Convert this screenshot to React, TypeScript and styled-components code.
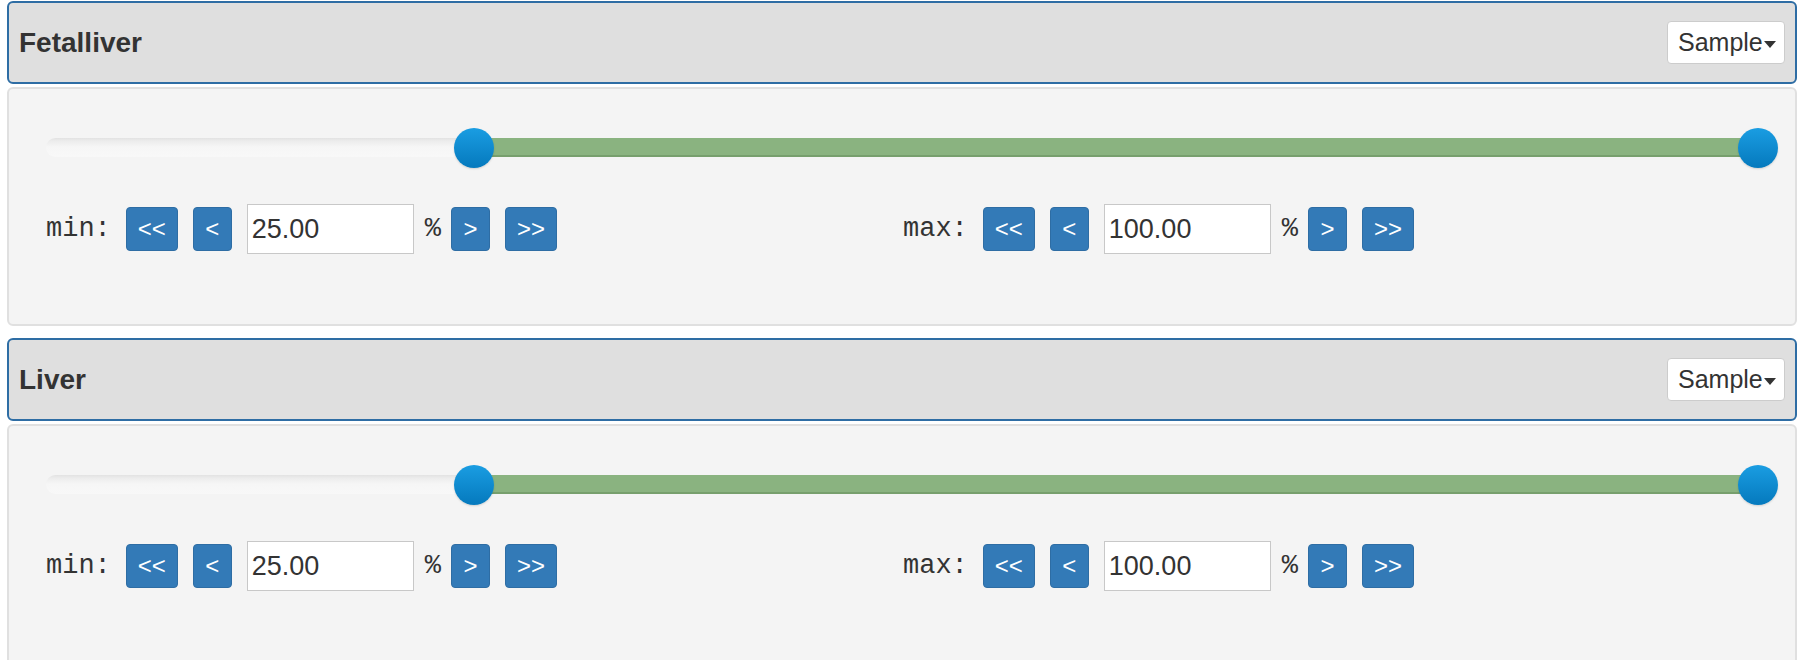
import React from 'react';
import styled, { createGlobalStyle } from 'styled-components';

const GlobalStyle = createGlobalStyle`
    html, body {
        margin: 0;
        padding: 0;
        background: #ffffff;
        font-family: "Liberation Sans", Arial, Helvetica, sans-serif;
        color: #333333;
    }
`;

const Page = styled.div`
    padding: 1px 11px 0 7px;
    border-top: 1px solid #2e6da4;
    margin-top: -1px;
`;

const Panel = styled.section`
    margin-bottom: 12px;
`;

const PanelHeader = styled.div`
    box-sizing: border-box;
    height: 83px;
    margin-bottom: 3px;
    padding: 0 10px;
    display: flex;
    align-items: center;
    justify-content: space-between;
    background: #dfdfdf;
    border: 2px solid #2e6da4;
    border-radius: 6px;
`;

const Title = styled.h4`
    margin: 0;
    font-size: 28px;
    font-weight: bold;
    color: #333333;
`;

const SampleButton = styled.button`
    box-sizing: border-box;
    height: 43px;
    width: 118px;
    padding: 0 0 0 10px;
    display: flex;
    align-items: center;
    background: #ffffff;
    border: 1px solid #cccccc;
    border-radius: 4px;
    font-family: "Liberation Sans", Arial, sans-serif;
    font-size: 25px;
    color: #333333;
    cursor: pointer;
`;

const Caret = styled.span`
    display: inline-block;
    width: 0;
    height: 0;
    margin-left: 1px;
    margin-top: 3px;
    border-top: 7px solid #333333;
    border-left: 6px solid transparent;
    border-right: 6px solid transparent;
`;

const PanelBody = styled.div<{ $open?: boolean }>`
    box-sizing: border-box;
    height: ${p => (p.$open ? '260px' : '239px')};
    padding-top: 39px;
    background: #f4f4f4;
    border: 2px solid #e0e0e0;
    border-radius: 6px;
`;

const SliderWrap = styled.div`
    padding: 0 37px 0 37px;
`;

const Track = styled.div`
    position: relative;
    height: 40px;

    &::before {
        content: '';
        position: absolute;
        left: 0;
        right: 0;
        top: 10px;
        height: 19px;
        border-radius: 10px;
        background: linear-gradient(#e2e2e2, #ececec 3px, #f6f6f6 9px, #f8f8f8);
    }
`;

const Range = styled.div`
    position: absolute;
    top: 10px;
    height: 19px;
    box-sizing: border-box;
    background: #8ab380;
    border-bottom: 2px solid #779f6d;
`;

const Handle = styled.div`
    position: absolute;
    top: 0;
    width: 40px;
    height: 40px;
    margin-left: -20px;
    border-radius: 50%;
    background: linear-gradient(#1a9de2, #0579bd);
    box-shadow: 0 1px 2px rgba(0, 0, 0, 0.15);
`;

const Controls = styled.div`
    display: grid;
    grid-template-columns: 1fr 1fr;
    margin-top: 36px;
    padding: 0 35px 0 37px;
`;

const Group = styled.div`
    display: flex;
    align-items: center;
    gap: 15px;
    height: 50px;
`;

const Mono = styled.span<{ $tight?: boolean }>`
    font-family: "Liberation Mono", "Courier New", monospace;
    font-size: 27px;
    color: #333333;
    margin: ${p => (p.$tight ? '0 -5px 0 -4px' : '0')};
`;

const StepButton = styled.button<{ $wide?: boolean }>`
    box-sizing: border-box;
    height: 44px;
    width: ${p => (p.$wide ? '52px' : '39px')};
    padding: 0;
    background: #337ab7;
    border: 1px solid #2e6da4;
    border-radius: 4px;
    color: #ffffff;
    font-family: "Liberation Sans", Arial, sans-serif;
    font-size: 24px;
    line-height: 1;
    cursor: pointer;
`;

const ValueInput = styled.input`
    box-sizing: border-box;
    width: 167px;
    height: 50px;
    padding: 0 4px;
    border: 1px solid #c8c8c8;
    background: #ffffff;
    font-family: "Liberation Sans", Arial, sans-serif;
    font-size: 27px;
    color: #333333;
    outline: none;
`;

interface BoundProps {
    label: string
    value: string
}

const Bound: React.FC<BoundProps> = ({ label, value }) => (
    <Group>
        <Mono>{label}</Mono>
        <StepButton $wide>&lt;&lt;</StepButton>
        <StepButton>&lt;</StepButton>
        <ValueInput defaultValue={value} />
        <Mono $tight>%</Mono>
        <StepButton>&gt;</StepButton>
        <StepButton $wide>&gt;&gt;</StepButton>
    </Group>
);

interface FilterPanelProps {
    name: string
    lo: number
    hi: number
    open?: boolean
}

const FilterPanel: React.FC<FilterPanelProps> = ({ name, lo, hi, open }) => (
    <Panel>
        <PanelHeader>
            <Title>{name}</Title>
            <SampleButton>Sample<Caret /></SampleButton>
        </PanelHeader>
        <PanelBody $open={open}>
            <SliderWrap>
                <Track>
                    <Range style={{ left: `${lo}%`, width: `${hi - lo}%` }} />
                    <Handle style={{ left: `${lo}%` }} />
                    <Handle style={{ left: `${hi}%` }} />
                </Track>
            </SliderWrap>
            <Controls>
                <Bound label="min:" value={lo.toFixed(2)} />
                <Bound label="max:" value={hi.toFixed(2)} />
            </Controls>
        </PanelBody>
    </Panel>
);

const App: React.FC = () => (
    <>
        <GlobalStyle />
        <Page>
            <FilterPanel name="Fetalliver" lo={25} hi={100} />
            <FilterPanel name="Liver" lo={25} hi={100} open />
        </Page>
    </>
);

export default App;
